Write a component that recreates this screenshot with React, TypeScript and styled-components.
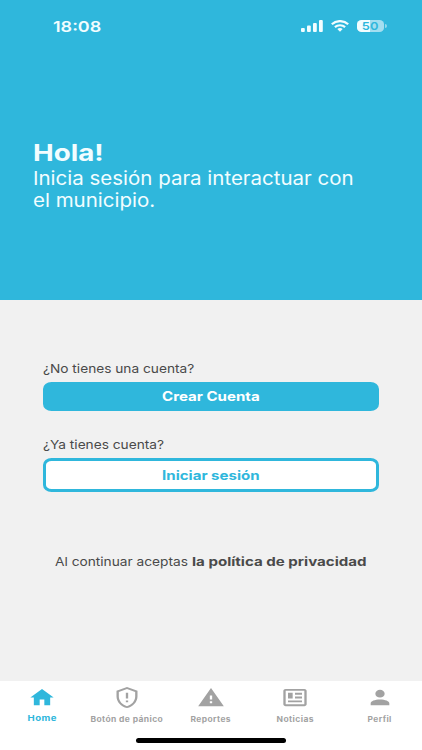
import React from 'react';
import styled, { createGlobalStyle } from 'styled-components';

const BLUE = '#2fb7dc';

const GlobalStyle = createGlobalStyle`
  * { box-sizing: border-box; }
  body { margin: 0; font-family: Inter, "Liberation Sans", sans-serif; }
`;

const Screen = styled.main`
  width: 422px;
  height: 750px;
  display: flex;
  flex-direction: column;
  overflow: hidden;
  background: #f1f1f1;
`;

/* Wide lettering: horizontal stretch from the given edge. */
const Wide = styled.span<{ $x: number; $origin?: string }>`
  display: block;
  width: max-content;
  white-space: nowrap;
  transform: scaleX(${(p) => p.$x});
  transform-origin: ${(p) => p.$origin ?? 'center'} center;
`;

const Header = styled.header`
  height: 299.5px;
  flex: none;
  background: ${BLUE};
  color: #f2fdff;
`;

const StatusBar = styled.div`
  height: 52px;
  padding: 0 35.5px 0 53px;
  display: flex;
  align-items: center;
  justify-content: space-between;
  font-size: 15px;
  font-weight: 600;
`;

const StatusIcons = styled.div`
  display: flex;
  align-items: center;
  gap: 8px;
  svg { display: block; }
`;

const Battery = styled.div`
  display: flex;
  align-items: center;
  gap: 1px;
`;

const BatteryBody = styled.div`
  width: 27px;
  height: 12px;
  border-radius: 4.5px / 4px;
  display: flex;
  align-items: center;
  justify-content: center;
  background: linear-gradient(90deg, #f2fdff 50%, #a3def0 50%);
  color: ${BLUE};
  font-size: 11px;
  line-height: 12px;
  font-weight: 600;
`;

const BatteryTip = styled.div`
  width: 1.5px;
  height: 4px;
  border-radius: 0 2px 2px 0;
  background: #92d8ec;
`;

const Greeting = styled.div`
  padding: 88px 0 0 32.8px;
`;

const Title = styled.h1`
  margin: 0;
  font-size: 23px;
  line-height: 27px;
  font-weight: 700;
`;

const Subtitle = styled.p`
  margin: 0;
  font-size: 18.5px;
  line-height: 22px;
`;

const Body = styled.section`
  flex: 1;
  padding: 61.5px 43px 0;
  color: #4a4a4a;
`;

const Question = styled.div`
  font-size: 12.3px;
  line-height: 15px;
`;

const Button = styled.button<{ $outline?: boolean }>`
  width: 336px;
  height: ${(p) => (p.$outline ? 34 : 29)}px;
  margin: ${(p) => (p.$outline ? '6px 0 0' : '6px 0 26px')};
  padding: ${(p) => (p.$outline ? '1px 0 0' : '0')};
  display: flex;
  align-items: center;
  justify-content: center;
  border: ${(p) => (p.$outline ? `3px solid ${BLUE}` : 'none')};
  border-radius: 8.5px / 7px;
  background: ${(p) => (p.$outline ? '#fff' : BLUE)};
  color: ${(p) => (p.$outline ? BLUE : '#fff')};
  font: 700 12.6px/16px Inter, "Liberation Sans", sans-serif;
`;

const Policy = styled.p`
  margin: 62px 0 0 12px;
  display: grid;
  grid-template-columns: 136.5px auto;
  font-size: 12.3px;
  line-height: 16px;
`;

const PolicyLink = styled.a`
  font-weight: 700;
`;

const TabBar = styled.nav`
  height: 69px;
  flex: none;
  background: #fff;
  display: flex;
  flex-direction: column;
  align-items: center;
`;

const Tabs = styled.div`
  width: 100%;
  height: 57px;
  display: grid;
  grid-template-columns: repeat(5, 1fr);
`;

const Tab = styled.a<{ $active?: boolean }>`
  padding-top: 5px;
  display: flex;
  flex-direction: column;
  align-items: center;
  color: ${(p) => (p.$active ? BLUE : '#a2a2a2')};
  font-size: ${(p) => (p.$active ? 8 : 7.4)}px;
  line-height: 10px;
  font-weight: 700;
  letter-spacing: 0.35px;
  svg { display: block; margin-bottom: ${(p) => (p.$active ? 4 : 5.6)}px; }
`;

const HomeIndicator = styled.div`
  width: 150px;
  height: 4.5px;
  border-radius: 3px;
  background: #000;
`;

const tabs = [
  { label: 'Home', x: 1.2, d: 'M10 20V14H14V20H19V12H22L12 3L2 12H5V20H10Z' },
  {
    label: 'Botón de pánico',
    x: 1.145,
    d: 'M21 11C21 16.55 17.16 21.74 12 23C6.84 21.74 3 16.55 3 11V5L12 1L21 5V11M12 21C15.75 20 19 15.54 19 11.22V6.3L12 3.18L5 6.3V11.22C5 15.54 8.25 20 12 21M11 7H13V13H11V7M11 15H13V17H11V15Z',
  },
  { label: 'Reportes', x: 1.14, d: 'M13 14H11V10H13M13 18H11V16H13M1 21H23L12 2L1 21Z' },
  {
    label: 'Noticias',
    x: 1.15,
    d: 'M20 5V19H4V5H20M20 3H4C2.89 3 2 3.89 2 5V19C2 20.11 2.89 21 4 21H20C21.11 21 22 20.11 22 19V5C22 3.89 21.11 3 20 3M18 15H6V17H18V15M10 7H6V13H10V7M12 9H18V7H12V9M18 11H12V13H18V11Z',
  },
  {
    label: 'Perfil',
    x: 1.13,
    d: 'M12 4A4 4 0 0 1 16 8A4 4 0 0 1 12 12A4 4 0 0 1 8 8A4 4 0 0 1 12 4M12 14C16.42 14 20 15.79 20 18V20H4V18C4 15.79 7.58 14 12 14Z',
  },
];

export default function App() {
  return (
    <>
      <GlobalStyle />
      <Screen>
        <Header>
          <StatusBar>
            <Wide $x={1.2} $origin="left">18:08</Wide>
            <StatusIcons>
              <svg width="22" height="12" viewBox="0 0 22 12" fill="currentColor">
                <rect x="0" y="8" width="3.8" height="4" rx="1" />
                <rect x="6" y="5.5" width="3.8" height="6.5" rx="1" />
                <rect x="12" y="3" width="3.8" height="9" rx="1" />
                <rect x="18" y="0" width="3.8" height="12" rx="1" />
              </svg>
              <svg width="18" height="12" viewBox="0 0 18 12" fill="none" stroke="currentColor" strokeWidth="2.2">
                <path d="M.8 4.3C5.3 0 12.7 0 17.2 4.3" />
                <path d="M3.9 7.1C6.7 4.6 11.3 4.6 14.1 7.1" />
                <path d="M6.3 8.9Q9 6.9 11.7 8.9L9 11.8Z" fill="currentColor" stroke="none" />
              </svg>
              <Battery>
                <BatteryBody><Wide $x={1.17}>50</Wide></BatteryBody>
                <BatteryTip />
              </Battery>
            </StatusIcons>
          </StatusBar>
          <Greeting>
            <Title><Wide $x={1.205} $origin="left">Hola!</Wide></Title>
            <Subtitle>
              <Wide $x={1.107} $origin="left">Inicia sesión para interactuar con</Wide>
              <Wide $x={1.107} $origin="left">el municipio.</Wide>
            </Subtitle>
          </Greeting>
        </Header>
        <Body>
          <Question><Wide $x={1.113} $origin="left">¿No tienes una cuenta?</Wide></Question>
          <Button><Wide $x={1.195}>Crear Cuenta</Wide></Button>
          <Question><Wide $x={1.113} $origin="left">¿Ya tienes cuenta?</Wide></Question>
          <Button $outline><Wide $x={1.195}>Iniciar sesión</Wide></Button>
          <Policy>
            <Wide $x={1.115} $origin="left">Al continuar aceptas </Wide>
            <PolicyLink><Wide $x={1.226} $origin="left">la política de privacidad</Wide></PolicyLink>
          </Policy>
        </Body>
        <TabBar>
          <Tabs>
            {tabs.map((t, i) => (
              <Tab key={t.label} $active={i === 0}>
                <svg width="28" height="23" viewBox="0 0 24 24" preserveAspectRatio="none" fill="currentColor">
                  <path d={t.d} />
                </svg>
                <Wide $x={t.x}>{t.label}</Wide>
              </Tab>
            ))}
          </Tabs>
          <HomeIndicator />
        </TabBar>
      </Screen>
    </>
  );
}
